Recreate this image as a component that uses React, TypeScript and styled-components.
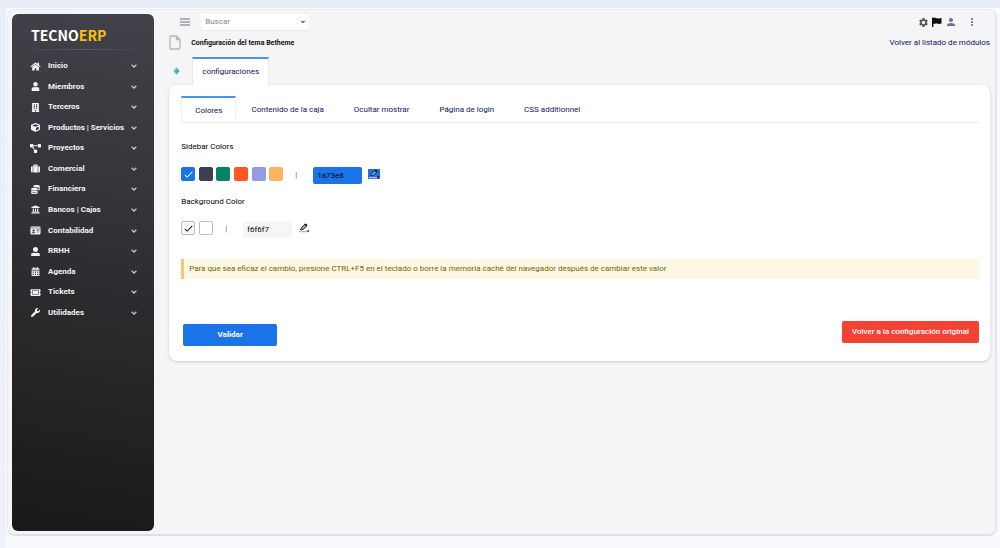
import React, { useState } from "react";
import styled, { createGlobalStyle } from "styled-components";
import {
  FaHome, FaUser, FaBuilding, FaCube, FaProjectDiagram, FaSuitcase, FaCoins,
  FaUniversity, FaIdCard, FaUserAlt, FaCalendarAlt, FaTicketAlt, FaWrench,
} from "react-icons/fa";
import { MdSettings, MdPerson, MdMoreVert, MdCheck } from "react-icons/md";

const GlobalStyle = createGlobalStyle`
  * { box-sizing: border-box; }
  body {
    margin: 0;
    background: #f8fafe;
    color: #212529;
    font-family: Roboto, "Liberation Sans", sans-serif;
    font-size: 8px;
    line-height: 12px;
  }
  button, input, select { font: inherit; }
  a { color: #0a1464; text-decoration: none; white-space: nowrap; }
`;

const Page = styled.div`
  min-height: 100vh;
  display: flex;
  padding: 9px 3px 12px 7px;
  background:
    linear-gradient(#e8edf6, #e8edf6) top / 100% 8px no-repeat,
    linear-gradient(#e8eef8, #eef3fb) left / 6px 100% no-repeat,
    #f8fafe;
`;

const Shell = styled.div`
  flex: 1;
  display: flex;
  gap: 15px;
  padding: 4px 5px 3px 4px;
  background: #f5f5f7;
  border: 1px solid #ebebed;
  border-right: 2px solid #e6e7ea;
  border-bottom: 2px solid #dfdfe1;
  border-radius: 8px;
`;

const Sidebar = styled.aside`
  flex: 0 0 142px;
  min-height: 517px;
  border-radius: 6px;
  background: linear-gradient(190deg, #42424a 0%, #191919 100%);
  color: #fff;
`;

const Brand = styled.div`
  padding: 11px 19px 0;
  font: 700 14px/20px "Noto Sans CJK SC", "Noto Sans", sans-serif;
  span { color: #fdc006; }
`;

const Divider = styled.hr`
  height: 1px;
  margin: 4px 6px 6px;
  border: 0;
  background: linear-gradient(90deg, transparent, #5c5c64, transparent);
`;

const Menu = styled.nav`
  display: flex;
  flex-direction: column;
  height: 267px;
`;

const MenuItem = styled.a`
  flex: 1;
  display: grid;
  grid-template-columns: 11px 1fr 6px;
  align-items: center;
  column-gap: 7px;
  padding: 0 17px 0 18px;
  color: #f4f4f5;
  font-weight: 700;
  white-space: nowrap;
  > svg:first-child { width: 100%; height: 9px; }
`;

const Chevron = () => (
  <svg width="6" height="4" viewBox="0 0 6 4" fill="none" stroke="#c4c4c9" strokeWidth="1.3">
    <path d="M.6.7 3 3 5.4.7" />
  </svg>
);

const Main = styled.main`
  flex: 1;
  min-width: 0;
`;

const TopBar = styled.header`
  display: flex;
  align-items: center;
  height: 16px;
  padding: 0 12px 0 11px;
`;

const IconButton = styled.button`
  display: flex;
  padding: 0;
  border: 0;
  background: none;
  color: ${(p) => p.color || "#6b6f91"};
`;

const SearchSelect = styled.select`
  width: 108px;
  height: 16px;
  margin-left: 11px;
  padding: 0 4px;
  border: 0;
  border-radius: 2px;
  appearance: none;
  background:
    linear-gradient(to bottom right, #777 50%, transparent 50%) right 3px center / 3px 3px no-repeat,
    linear-gradient(to bottom left, #777 50%, transparent 50%) right 6px center / 3px 3px no-repeat,
    #fff;
  box-shadow: 0 1px 1px #e9e9eb;
  color: #85858a;
`;

const Tools = styled.div`
  display: flex;
  align-items: center;
  gap: 3px;
  margin-left: auto;
  button:last-child { margin-left: 6px; }
`;

const TitleRow = styled.div`
  display: flex;
  align-items: center;
  height: 25px;
  h1 {
    margin: 0 auto 0 10px;
    font-size: 7px;
    line-height: 12px;
    font-weight: 700;
    color: #111;
  }
`;

const PageTabs = styled.div`
  display: flex;
  align-items: center;
  gap: 12px;
  height: 28px;
  margin-top: 2px;
  padding-left: 4px;
`;

const PageTab = styled.a`
  height: 28px;
  padding: 7px 9px 0;
  border: 1px solid #e8e8ea;
  border-width: 2px 1px 0;
  border-top-color: #4a92f0;
  background: #fff;
`;

const Card = styled.section`
  padding: 11px 11px 15px 12px;
  border-radius: 8px;
  background: #fff;
  box-shadow: 0 1px 3px #c9c9cc;
`;

const Tabs = styled.nav`
  display: flex;
  height: 27px;
  border-bottom: 1px solid #ebebed;
`;

const Tab = styled.a<{ $active?: boolean }>`
  padding: ${(p) => (p.$active ? "7px 13px 0" : "6px 14px 0")};
  border: 1px solid transparent;
  border-width: 2px 1px 0;
  border-color: ${(p) => (p.$active ? "#4a92f0 #f0f0f2" : "transparent")};
`;

const Heading = styled.h2`
  margin: 0;
  font-size: 8px;
  line-height: 12px;
  font-weight: 400;
  color: #000;
`;

const ColorRow = styled.div`
  display: flex;
  align-items: flex-start;
  height: 18px;
`;

const Swatches = styled.div<{ $width: number }>`
  display: flex;
  justify-content: space-between;
  width: ${(p) => p.$width}px;
`;

const Swatch = styled.label<{ $color: string; $outlined?: boolean }>`
  display: grid;
  place-items: center;
  width: 14px;
  height: 14px;
  border: 1px solid ${(p) => (p.$outlined ? "#bdbdc0" : p.$color)};
  border-radius: 2px;
  background: ${(p) => p.$color};
  color: ${(p) => (p.$outlined ? "#111" : "#fff")};
  input, svg { grid-area: 1 / 1; }
  input { appearance: none; margin: 0; width: 12px; height: 12px; }
  svg { display: none; pointer-events: none; }
  input:checked + svg { display: block; }
`;

const Separator = styled.span`
  width: 2px;
  margin: 2px 16px 0 12px;
  color: #745070;
`;

const HexInput = styled.input<{ $fill: string }>`
  width: 49px;
  height: 17px;
  padding: 0 4px;
  border: 0;
  border-radius: 2px;
  background: ${(p) => p.$fill};
  color: #000;
`;

const PickerButton = styled.button<{ $fill: string }>`
  display: flex;
  margin: 2px 0 0 6px;
  padding: 0;
  border: 0;
  background: ${(p) => p.$fill};
`;

const Notice = styled.p`
  margin: 0;
  padding: 4px 5px;
  border-left: 3px solid #f2c879;
  background: #fcf8e3;
  color: #756404;
`;

const Actions = styled.div`
  display: flex;
  align-items: flex-start;
  justify-content: space-between;
  padding-left: 2px;
`;

const ActionButton = styled.button<{ $danger?: boolean }>`
  min-width: 94px;
  height: 22px;
  margin-top: ${(p) => (p.$danger ? 0 : 3)}px;
  padding: 0 10px;
  border: 0;
  border-radius: 2px;
  background: ${(p) => (p.$danger ? "#f44335" : "#1a73e8")};
  color: #fff;
  font-weight: ${(p) => (p.$danger ? 500 : 700)};
`;

const Spacer = styled.div<{ $h: number }>`
  height: ${(p) => p.$h}px;
`;

const Pencil = () => (
  <svg width="12" height="10" viewBox="0 0 12 10">
    <path d="M1 8.600h8" stroke="#c9b3d4" strokeWidth="1.4" />
    <path d="M2.5 7 3.5 4.6 6.8 1.2 8.8 3 5.3 6.3Z" fill="#8ea0c4" stroke="#182244" strokeWidth=".9" />
    <path d="m6.2 1.5 1.5-1 1.8 1.6-1 1.3Z" fill="#111" />
    <path d="M8.6 7.6h3L10.1 9.3Z" fill="#111" />
  </svg>
);

const menu = [
  ["Inicio", FaHome], ["Miembros", FaUser], ["Terceros", FaBuilding],
  ["Productos | Servicios", FaCube], ["Proyectos", FaProjectDiagram],
  ["Comercial", FaSuitcase], ["Financiera", FaCoins], ["Bancos | Cajas", FaUniversity],
  ["Contabilidad", FaIdCard], ["RRHH", FaUserAlt], ["Agenda", FaCalendarAlt],
  ["Tickets", FaTicketAlt], ["Utilidades", FaWrench],
] as const;

const tabs = ["Colores", "Contenido de la caja", "Ocultar mostrar", "Página de login", "CSS additionnel"];
const sidebarColors = ["#1a73e8", "#3a3f55", "#058463", "#ff5722", "#929ce3", "#ffb260"];
const backgroundColors = ["#f6f6f7", "#ffffff"];

export default function App() {
  const [sidebarHex, setSidebarHex] = useState("1a73e8");
  const [backgroundHex, setBackgroundHex] = useState("f6f6f7");
  return (
    <>
      <GlobalStyle />
      <Page>
        <Shell>
          <Sidebar>
            <Brand>TECNO<span>ERP</span></Brand>
            <Divider />
            <Menu>
              {menu.map(([name, Icon]) => (
                <MenuItem href="#" key={name}><Icon />{name}<Chevron /></MenuItem>
              ))}
            </Menu>
          </Sidebar>
          <Main>
            <TopBar>
              <IconButton aria-label="Menú">
                <svg width="10" height="8" viewBox="0 0 10 8" stroke="currentColor">
                  <path d="M0 1h10M0 4h10M0 7h10" />
                </svg>
              </IconButton>
              <SearchSelect aria-label="Buscar"><option>Buscar</option></SearchSelect>
              <Tools>
                <IconButton color="#555" aria-label="Configuración"><MdSettings size={11} /></IconButton>
                <IconButton color="#111" aria-label="Idioma">
                  <svg width="10" height="10" viewBox="0 0 10 10" fill="currentColor">
                    <path d="M0 .5h1.4V1c2-.8 3 .8 5 .4L9.5 1v5.6c-2 .8-3.4.4-4.6 0-1.4-.4-2.4 0-3.5.3V10H0Z" />
                  </svg>
                </IconButton>
                <IconButton aria-label="Usuario"><MdPerson size={12} /></IconButton>
                <IconButton aria-label="Más"><MdMoreVert size={12} /></IconButton>
              </Tools>
            </TopBar>
            <TitleRow>
              <svg width="12" height="15" viewBox="0 0 12 15" fill="none" stroke="#b5b5b5" strokeWidth="1.3">
                <path d="M2 1h5.5L11 4.500V13a1 1 0 0 1-1 1H2a1 1 0 0 1-1-1V2a1 1 0 0 1 1-1ZM7.500 1v3.500H11" />
              </svg>
              <h1>Configuración del tema Betheme</h1>
              <a href="#">Volver al listado de módulos</a>
            </TitleRow>
            <PageTabs>
              <svg width="7" height="8" viewBox="0 0 7 8">
                <path d="M3.500 0 7 4 3.500 8 0 4Z" fill="#8fd3d8" />
                <path d="M3.500 1.500 5.800 4 3.500 7Z" fill="#2c8fb0" />
                <path d="M3.500 1.500 1.500 4l2 3Z" fill="#4eb7a6" />
              </svg>
              <PageTab href="#">configuraciones</PageTab>
            </PageTabs>
            <Card>
              <Tabs>
                {tabs.map((t, i) => <Tab href="#" key={t} $active={i === 0}>{t}</Tab>)}
              </Tabs>
              <Spacer $h={18} />
              <Heading>Sidebar Colors</Heading>
              <Spacer $h={14} />
              <ColorRow>
                <Swatches $width={102}>
                  {sidebarColors.map((c, i) => (
                    <Swatch key={c} $color={c}>
                      <input type="radio" name="sidebar" aria-label={c} defaultChecked={i === 0} />
                      <MdCheck size={11} />
                    </Swatch>
                  ))}
                </Swatches>
                <Separator>|</Separator>
                <HexInput $fill="#1a73e8" aria-label="Sidebar Colors" value={sidebarHex} onChange={(e) => setSidebarHex(e.target.value)} />
                <PickerButton $fill="#1a73e8" aria-label="Sidebar Colors"><Pencil /></PickerButton>
              </ColorRow>
              <Spacer $h={11} />
              <Heading>Background Color</Heading>
              <Spacer $h={13} />
              <ColorRow>
                <Swatches $width={32}>
                  {backgroundColors.map((c, i) => (
                    <Swatch key={c} $color={c} $outlined>
                      <input type="radio" name="background" aria-label={c} defaultChecked={i === 0} />
                      <MdCheck size={11} />
                    </Swatch>
                  ))}
                </Swatches>
                <Separator>|</Separator>
                <HexInput $fill="#f6f6f7" aria-label="Background Color" value={backgroundHex} onChange={(e) => setBackgroundHex(e.target.value)} />
                <PickerButton $fill="#ffffff" aria-label="Background Color"><Pencil /></PickerButton>
              </ColorRow>
              <Spacer $h={20} />
              <Notice>
                Para que sea eficaz el cambio, presione CTRL+F5 en el teclado o borre la memoria caché del navegador después de cambiar este valor
              </Notice>
              <Spacer $h={42} />
              <Actions>
                <ActionButton>Validar</ActionButton>
                <ActionButton $danger>Volver a la configuración original</ActionButton>
              </Actions>
            </Card>
          </Main>
        </Shell>
      </Page>
    </>
  );
}
